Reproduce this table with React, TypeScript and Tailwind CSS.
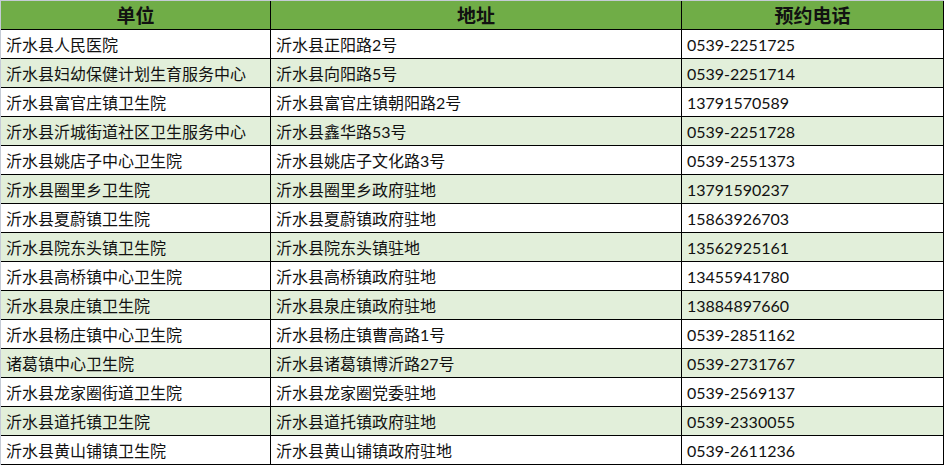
const rows: [string, string, string][] = [
  ["沂水县人民医院", "沂水县正阳路2号", "0539-2251725"],
  ["沂水县妇幼保健计划生育服务中心", "沂水县向阳路5号", "0539-2251714"],
  ["沂水县富官庄镇卫生院", "沂水县富官庄镇朝阳路2号", "13791570589"],
  ["沂水县沂城街道社区卫生服务中心", "沂水县鑫华路53号", "0539-2251728"],
  ["沂水县姚店子中心卫生院", "沂水县姚店子文化路3号", "0539-2551373"],
  ["沂水县圈里乡卫生院", "沂水县圈里乡政府驻地", "13791590237"],
  ["沂水县夏蔚镇卫生院", "沂水县夏蔚镇政府驻地", "15863926703"],
  ["沂水县院东头镇卫生院", "沂水县院东头镇驻地", "13562925161"],
  ["沂水县高桥镇中心卫生院", "沂水县高桥镇政府驻地", "13455941780"],
  ["沂水县泉庄镇卫生院", "沂水县泉庄镇政府驻地", "13884897660"],
  ["沂水县杨庄镇中心卫生院", "沂水县杨庄镇曹高路1号", "0539-2851162"],
  ["诸葛镇中心卫生院", "沂水县诸葛镇博沂路27号", "0539-2731767"],
  ["沂水县龙家圈街道卫生院", "沂水县龙家圈党委驻地", "0539-2569137"],
  ["沂水县道托镇卫生院", "沂水县道托镇政府驻地", "0539-2330055"],
  ["沂水县黄山铺镇卫生院", "沂水县黄山铺镇政府驻地", "0539-2611236"],
];

const headers = ["单位", "地址", "预约电话"];

export default function App() {
  return (
    <div
      className="h-[465px] w-[944px] overflow-hidden bg-white"
      style={{ fontFamily: 'Lato, "Noto Sans CJK SC", sans-serif' }}
    >
      <div className="border-l border-t border-[#c5cbd6]">
        <div className="grid grid-cols-[269px_410px_261px] gap-px bg-black pb-px pr-px">
          {headers.map((h) => (
            <div
              key={h}
              className="flex h-[28px] items-center justify-center bg-[#70ad47] text-[19px] font-bold leading-none text-[#111]"
            >
              {h}
            </div>
          ))}
          {rows.map((row, i) =>
            row.map((cell, j) => (
              <div
                key={`${i}-${j}`}
                className={`flex h-[28px] items-center pl-[5px] pt-[2px] text-[16px] leading-none text-[#111] ${
                  i % 2 === 1 ? "bg-[#e2efda]" : "bg-white"
                }`}
              >
                {cell}
              </div>
            ))
          )}
        </div>
      </div>
    </div>
  );
}
